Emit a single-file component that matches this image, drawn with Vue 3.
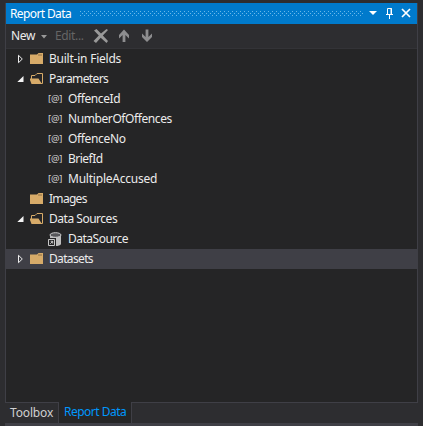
<script setup>
const rows = [
  { label: 'Built-in Fields', icon: 'folder', arrow: 'closed', tracking: -0.23 },
  { label: 'Parameters', icon: 'open', arrow: 'open', tracking: -0.6 },
  { label: 'OffenceId', icon: 'param', child: true, tracking: -0.4 },
  { label: 'NumberOfOffences', icon: 'param', child: true, tracking: -0.41 },
  { label: 'OffenceNo', icon: 'param', child: true, tracking: -0.35 },
  { label: 'BriefId', icon: 'param', child: true, tracking: -0.5 },
  { label: 'MultipleAccused', icon: 'param', child: true, tracking: -0.22 },
  { label: 'Images', icon: 'folder', tracking: -0.7 },
  { label: 'Data Sources', icon: 'open', arrow: 'open', tracking: -0.48 },
  { label: 'DataSource', icon: 'source', child: true, tracking: -0.5 },
  { label: 'Datasets', icon: 'folder', arrow: 'closed', selected: true, tracking: -0.65 },
]
</script>

<template>
  <div class="window">
    <section class="panel">
      <header class="title">
        <span class="name">Report Data</span>
        <svg class="grip" width="283" height="5">
          <defs>
            <pattern id="dots" width="4" height="4" patternUnits="userSpaceOnUse">
              <rect width="1" height="1" fill="#69b8ea" />
              <rect x="2" y="2" width="1" height="1" fill="#69b8ea" />
            </pattern>
          </defs>
          <rect width="283" height="5" fill="url(#dots)" />
        </svg>
        <svg class="controls" width="43" height="12" viewBox="0 0 43 12">
          <path d="M0 4H8L4 8Z" fill="#fff" />
          <path d="M18.5 7V1.5H22.5V7M17 7.5H24M20.5 8V12" fill="none" stroke="#fff" />
          <path d="M22 1V7" stroke="#fff" />
          <path d="M33 2L41 10M41 2L33 10" stroke="#fff" stroke-width="1.7" />
        </svg>
      </header>
      <nav class="toolbar">
        <span class="new">New</span>
        <svg class="caret" width="6" height="4"><path d="M0 0H6L3 3.5Z" fill="#999" /></svg>
        <span class="edit">Edit...</span>
        <svg class="tools" width="60" height="16" viewBox="0 0 60 16">
          <path d="M1 2.5L3.5 1L8 5.5L13.5 1L15 2L9.8 7.5L15 13L13.5 15L7.7 9.7L3 15L.5 13L5.8 7.5Z" fill="#999" />
          <path d="M31 1.5L36 7V10.5L32.4 7V14H29.6V7L26 10.5V7Z" fill="#8d8d8f" />
          <path d="M54 14L59 9V5.5L55.4 9V1.5H52.6V9L49 5.5V9Z" fill="#8d8d8f" />
        </svg>
      </nav>
      <ul class="tree">
        <li v-for="row in rows" :key="row.label" :class="{ child: row.child, selected: row.selected }">
          <span class="arrow">
            <svg v-if="row.arrow === 'closed'" width="7" height="10" viewBox="0 0 7 10"><path d="M1.5 1.3V8.7L5.3 5Z" fill="none" stroke="#eee" /></svg>
            <svg v-if="row.arrow === 'open'" width="7" height="10" viewBox="0 0 7 10"><path d="M6.5 2V8H.3Z" fill="#f4f4f4" /></svg>
          </span>
          <span class="icon">
            <svg v-if="row.icon === 'folder'" width="14" height="12" viewBox="0 0 14 12">
              <path d="M0 1.5H7L8.5 0H13V11H0Z" fill="#d7ab69" />
              <path d="M8 2H12" stroke="#795f3c" stroke-width=".8" />
            </svg>
            <svg v-else-if="row.icon === 'open'" width="14" height="12" viewBox="0 0 14 12">
              <path d="M1.5 6V2.5H5L7 .5H12.5V10.5H11" fill="none" stroke="#d7ab69" />
              <path d="M-.5 5.5H8.5L12 11H1.5Z" fill="#d7ab69" />
            </svg>
            <span v-else-if="row.icon === 'param'" class="param">[@]</span>
            <svg v-else width="15" height="15" viewBox="0 0 15 15">
              <path d="M2 3V12C3 14.8 12 14.8 13 12V3Z" fill="#bdbdbd" />
              <ellipse cx="7.5" cy="3" rx="5.5" ry="2.3" fill="#57575a" stroke="#cecece" />
              <path d="M0 6H8V15H0Z" fill="#252526" />
              <path d="M.5 7.5H6.5V13.5H.5ZM2.3 11.8L4.7 9.3M2.7 9.3H4.7V11.5" fill="none" stroke="#c8c8c8" />
            </svg>
          </span>
          <span class="label" :style="{ letterSpacing: row.tracking + 'px' }">{{ row.label }}</span>
        </li>
      </ul>
    </section>
    <footer class="tabs">
      <span class="tab">Toolbox</span>
      <span class="tab active">Report Data</span>
      <span class="rest"></span>
    </footer>
    <div class="bottom"></div>
  </div>
</template>

<style>
body { background: #2d2d30; overflow: hidden; }
</style>

<style scoped>
.window {
  box-sizing: border-box; width: 423px; height: 426px; padding: 3px 5px 0;
  background: #2d2d30; color: #ececec; display: flex; flex-direction: column;
  font: 12px/20px "Noto Sans", "Open Sans", sans-serif; letter-spacing: -.3px;
  white-space: nowrap;
}
.panel {
  box-sizing: border-box; width: 413px; height: 400px; flex: none;
  border: solid #3f3f46; border-width: 0 1px 1px; background: #252526;
}
.title { height: 21px; background: #007acc; display: flex; align-items: center; color: #fff; }
.name { box-sizing: border-box; width: 74px; padding-left: 4px; letter-spacing: -.62px; }
.grip { margin-right: 6px; }
.controls { margin-top: -1px; }
.toolbar { box-sizing: border-box; height: 25px; background: #2d2d30; border-bottom: 1px solid #333337; display: flex; align-items: center; padding-left: 5px; }
.new { width: 30px; }
.caret { margin-top: 2px; }
.edit { color: #656565; width: 37px; margin-left: 8px; letter-spacing: -.35px; }
.tools { margin-left: 1px; }
.tree { list-style: none; margin: 0; padding: 0; }
li { height: 20px; display: flex; align-items: center; padding-left: 11px; }
li.child { padding-left: 29px; }
li.selected { background: #3f3f46; }
.arrow { width: 13px; display: flex; }
.icon { width: 19px; display: flex; align-items: center; }
.child .icon { width: 20px; }
.param { font-size: 9.5px; letter-spacing: -.2px; color: #d4d4d4; }
.tabs { height: 20px; display: flex; }
.tab { box-sizing: border-box; width: 54px; padding-left: 5px; border-right: 1px solid #3f3f46; color: #d0d0d0; letter-spacing: -.15px; }
.tab.active { width: 73px; color: #0097fb; letter-spacing: -.5px; margin-top: -1px; background: #252526; }
.rest { flex: 1; }
.bottom { height: 3px; width: 413px; background: #3f3f46; }
</style>
